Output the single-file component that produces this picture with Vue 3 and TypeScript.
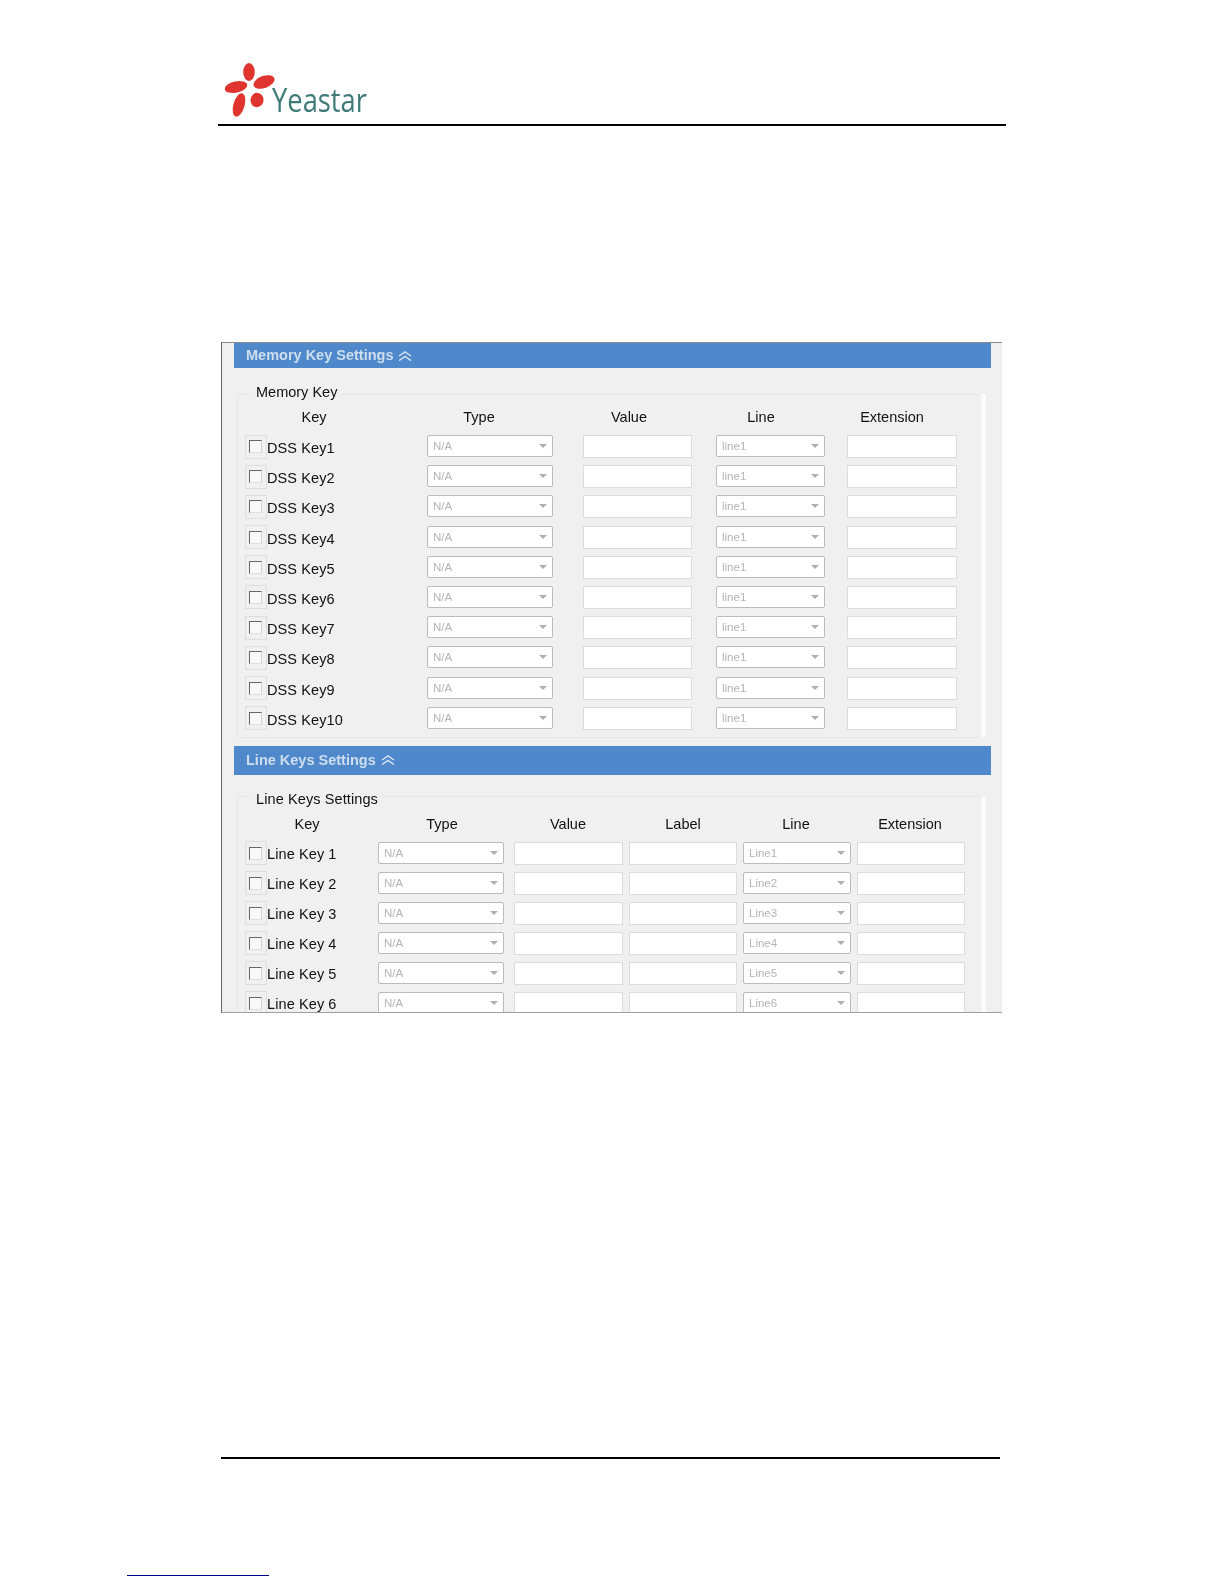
<script setup lang="ts">
interface Column { kind: 'label' | 'select' | 'input'; w: number; gap: number }
interface Section {
  id: string; title: string; legend: string;
  head: { text: string; w: number }[];
  cols: Column[];
  rows: { label: string; type: string; line: string }[];
}
const sections: Section[] = [
  {
    id: 'mem', title: 'Memory Key Settings', legend: 'Memory Key',
    head: [
      { text: 'Key', w: 138 }, { text: 'Type', w: 192 }, { text: 'Value', w: 108 },
      { text: 'Line', w: 156 }, { text: 'Extension', w: 106 },
    ],
    cols: [
      { kind: 'label', w: 182, gap: 0 }, { kind: 'select', w: 126, gap: 30 },
      { kind: 'input', w: 109, gap: 24 }, { kind: 'select', w: 109, gap: 22 }, { kind: 'input', w: 110, gap: 0 },
    ],
    rows: Array.from({ length: 10 }, (_, i) => ({ label: `DSS Key${i + 1}`, type: 'N/A', line: 'line1' })),
  },
  {
    id: 'line', title: 'Line Keys Settings', legend: 'Line Keys Settings',
    head: [
      { text: 'Key', w: 124 }, { text: 'Type', w: 146 }, { text: 'Value', w: 106 },
      { text: 'Label', w: 124 }, { text: 'Line', w: 102 }, { text: 'Extension', w: 126 },
    ],
    cols: [
      { kind: 'label', w: 133, gap: 0 }, { kind: 'select', w: 126, gap: 10 }, { kind: 'input', w: 109, gap: 6 },
      { kind: 'input', w: 108, gap: 6 }, { kind: 'select', w: 108, gap: 6 }, { kind: 'input', w: 108, gap: 0 },
    ],
    rows: Array.from({ length: 6 }, (_, i) => ({ label: `Line Key ${i + 1}`, type: 'N/A', line: `Line${i + 1}` })),
  },
];
const selectText = (sec: Section, row: Section['rows'][number], idx: number) => {
  const firstSelect = sec.cols.findIndex((c) => c.kind === 'select');
  return idx === firstSelect ? row.type : row.line;
};
</script>

<template>
  <div class="page">
    <header class="top">
      <svg class="logo" width="180" height="66" viewBox="222 58 180 66" role="img" aria-label="Yeastar logo">
        <g fill="#e0352f">
          <ellipse cx="249" cy="72" rx="5.800" ry="9" />
          <ellipse cx="264" cy="82" rx="11" ry="6" transform="rotate(-20 264 82)" />
          <ellipse cx="236" cy="87" rx="11.500" ry="5.600" transform="rotate(-12 236 87)" />
          <ellipse cx="239" cy="105" rx="5.600" ry="12" transform="rotate(16 239 105)" />
          <ellipse cx="257" cy="100" rx="6.500" ry="7.200" transform="rotate(10 257 100)" />
        </g>
        <text x="272" y="112" class="brand" textLength="95" lengthAdjust="spacingAndGlyphs">Yeastar</text>
      </svg>
    </header>
    <div class="rule top-rule"></div>

    <main class="panel">
      <section v-for="sec in sections" :key="sec.id" :class="['sec', sec.id]">
        <div class="bar">
          <span class="bar-title">{{ sec.title }}</span>
          <svg class="chev" width="14" height="10" viewBox="0 0 14 10" aria-hidden="true">
            <path d="M1 5 7 1 13 5M1 9.500 7 5.500 13 9.500" fill="none" stroke="#d4e2f2" stroke-width="1.500" />
          </svg>
        </div>
        <fieldset class="group">
          <legend>{{ sec.legend }}</legend>
          <div class="head">
            <span v-for="h in sec.head" :key="h.text" :style="{ width: h.w + 'px' }">{{ h.text }}</span>
          </div>
          <div class="rows">
            <div v-for="row in sec.rows" :key="row.label" class="row">
              <template v-for="(c, i) in sec.cols" :key="i">
                <div v-if="c.kind === 'label'" class="key" :style="{ width: c.w + 'px' }">
                  <span class="check"><i></i></span>
                  <span class="key-text">{{ row.label }}</span>
                </div>
                <div v-else-if="c.kind === 'select'" class="select" :style="{ width: c.w + 'px', marginRight: c.gap + 'px' }">
                  {{ selectText(sec, row, i) }}
                </div>
                <div v-else class="input" :style="{ width: c.w + 'px', marginRight: c.gap + 'px' }"></div>
              </template>
            </div>
          </div>
        </fieldset>
      </section>
    </main>

    <div class="rule bottom-rule"></div>
    <div class="link-line"></div>
  </div>
</template>

<style scoped>
.page {
  width: 1224px;
  height: 1584px;
  background: #fff;
  overflow: hidden;
  font-family: "Liberation Sans", Arial, sans-serif;
  color: #111;
}
.top {
  height: 124px;
  box-sizing: border-box;
  padding: 58px 0 0 222px;
}
.logo { display: block; filter: blur(0.6px); }
.brand {
  font-family: "Open Sans", "Noto Sans", sans-serif;
  font-weight: 400;
  font-size: 33px;
  fill: #3f7c78;
}
.rule { background: #000; height: 2px; }
.top-rule { margin-left: 218px; width: 788px; }
.panel {
  margin: 216px 0 0 221px;
  width: 781px;
  height: 671px;
  box-sizing: border-box;
  background: #f0f0f0;
  border-left: 1.500px solid #666;
  border-top: 1px solid #8a8a8a;
  border-bottom: 1px solid #a0a0a0;
  overflow: hidden;
  filter: blur(0.4px);
}
.bar {
  margin-left: 12px;
  width: 757px;
  height: 25px;
  background: #5089cb;
  display: flex;
  align-items: center;
  gap: 5px;
  padding-left: 12px;
  box-sizing: border-box;
  color: #cfdeef;
  font-weight: 700;
  font-size: 14.500px;
  line-height: 23px;
}
.line .bar { height: 29px; margin-top: 8px; }
.chev { display: block; }
.group {
  position: relative;
  margin: 16px 0 0 15px;
  width: 745px;
  min-width: 0;
  box-sizing: border-box;
  padding: 0 0 7px 7px;
  border: 1px solid #e6e6e6;
  border-radius: 3px;
}
.line .group { margin-top: 12px; }
.group::after {
  content: "";
  position: absolute;
  top: -10px;
  bottom: 0;
  left: 100%;
  width: 5px;
  background: #fbfbfb;
}
legend {
  margin-left: 6px;
  padding: 0 5px 4px;
  font-size: 14.500px;
  line-height: 16px;
}
.line legend { padding: 4px 5px 0; letter-spacing: 0.1px; }
.head {
  display: flex;
  padding-top: 4px;
  font-size: 14.500px;
  line-height: 18px;
  text-align: center;
}
.line .head { padding-top: 8px; }
.rows {
  display: flex;
  flex-direction: column;
  gap: 7.200px;
  margin-top: 9px;
}
.line .rows { gap: 7px; }
.row {
  display: flex;
  height: 23px;
  align-items: flex-start;
}
.key {
  display: flex;
  align-items: center;
  height: 23px;
  font-size: 14.500px;
}
.key-text { padding-top: 3px; white-space: nowrap; letter-spacing: 0.1px; }
.line .key-text { padding-top: 2px; }
.check {
  flex: none;
  width: 22px;
  height: 24px;
  box-sizing: border-box;
  border: 1px solid #dedede;
  display: flex;
  align-items: center;
  justify-content: center;
  padding: 0 1px 0 0;
}
.check i {
  display: block;
  width: 13px;
  height: 13px;
  box-sizing: border-box;
  background: #f8f8f8;
  border-top: 1.500px solid #666;
  border-left: 1.500px solid #666;
  border-right: 1px solid #d4d4d4;
  border-bottom: 1px solid #e0e0e0;
}
.select {
  position: relative;
  height: 22px;
  box-sizing: border-box;
  background: #fff;
  border: 1px solid #bcbcbc;
  border-radius: 2px;
  padding-left: 5px;
  font-size: 11.500px;
  line-height: 20px;
  color: #b4b4b4;
}
.select::after {
  content: "";
  position: absolute;
  right: 5px;
  top: 8px;
  border-left: 4px solid transparent;
  border-right: 4px solid transparent;
  border-top: 4px solid #b0b0b0;
}
.input {
  height: 23px;
  box-sizing: border-box;
  background: #fff;
  border: 1px solid #dcdcdc;
}
.bottom-rule {
  margin: 444px 0 0 221px;
  width: 779px;
}
.link-line {
  margin: 116px 0 0 127px;
  width: 142px;
  height: 1px;
  background: #00008b;
}
</style>
